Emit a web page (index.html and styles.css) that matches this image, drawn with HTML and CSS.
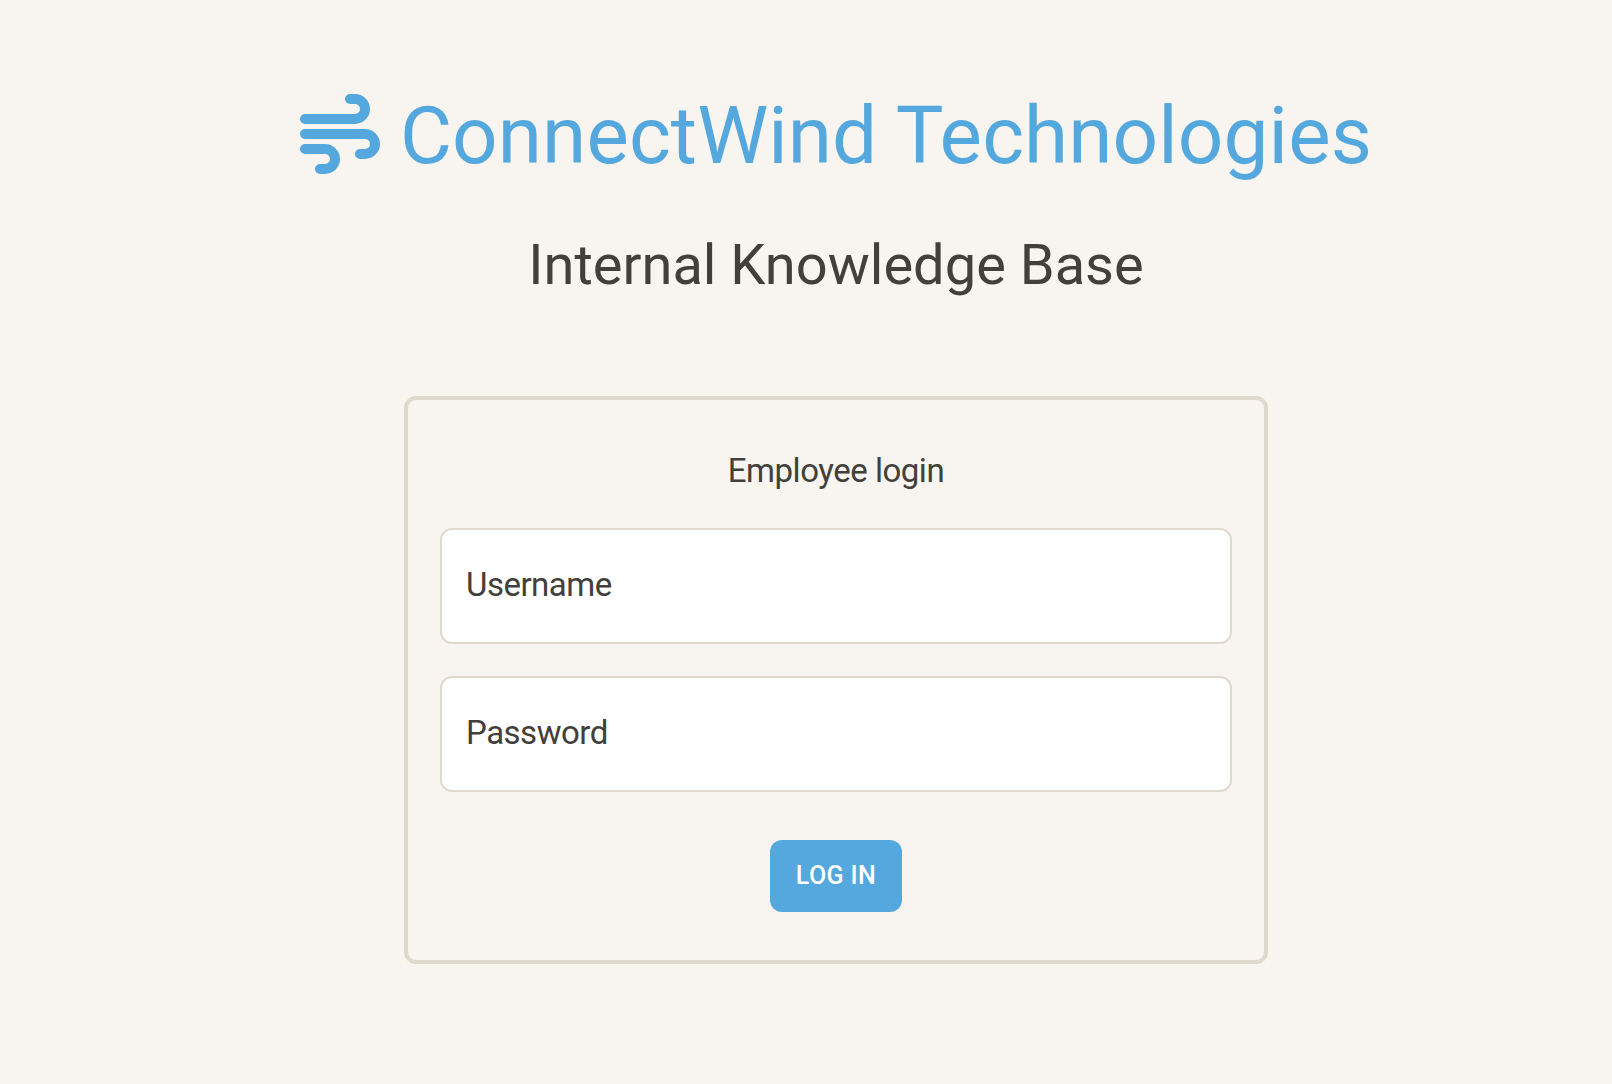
FILE: index.html
```
<!DOCTYPE html>
<html lang="en">
<head>
<meta charset="utf-8">
<title>ConnectWind Technologies</title>
<link rel="stylesheet" href="styles.css">
</head>
<body>
<main class="page">
  <h1 class="brand">
    <svg class="brand-icon" viewBox="0 0 80 80" aria-hidden="true">
      <path d="M5 25H55A10 10 0 0 0 55 5H50M5 40H65A10 10 0 0 1 65 60H60M5 55H25A10 10 0 0 1 25 75H20"/>
    </svg>
    <span class="brand-name">ConnectWind Technologies</span>
  </h1>
  <h2 class="subtitle">Internal Knowledge Base</h2>
  <form class="card">
    <p class="card-title">Employee login</p>
    <input class="field" type="text" placeholder="Username">
    <input class="field" type="password" placeholder="Password">
    <button class="submit" type="button">LOG IN</button>
  </form>
</main>
</body>
</html>
```
FILE: styles.css
```
* { box-sizing: border-box; }
body {
  margin: 0;
  background: #f8f4ef;
  color: #41403b;
  font-family: Roboto, sans-serif;
}
.page {
  display: flex;
  flex-direction: column;
  align-items: center;
  min-height: 1084px;
  padding: 86px 0 0 60px;
}
.brand {
  display: flex;
  align-items: center;
  gap: 20px;
  margin: 0;
  height: 96px;
  color: #54a8dd;
  font-size: 80px;
  font-weight: 400;
  line-height: 96px;
  letter-spacing: 0.1px;
  white-space: nowrap;
}
.brand-name { padding-top: 4px; }
.brand-icon {
  width: 80px;
  height: 80px;
  fill: none;
  stroke: currentColor;
  stroke-width: 10;
  stroke-linecap: round;
}
.subtitle {
  margin: 51px 0 0;
  font-size: 56px;
  font-weight: 400;
  line-height: 64px;
}
.card {
  display: flex;
  flex-direction: column;
  align-items: center;
  width: 864px;
  height: 568px;
  margin-top: 99px;
  padding: 47px 32px;
  border: 4px solid #e0d9cd;
  border-radius: 12px;
}
.card-title {
  margin: 0 0 33px;
  font-size: 33px;
  line-height: 48px;
  letter-spacing: -0.48px;
}
.field {
  width: 100%;
  height: 116px;
  margin-bottom: 32px;
  padding: 0 24px 3px;
  border: 2px solid #e0d9cd;
  border-radius: 12px;
  background: #fff;
  font: 33px Roboto, sans-serif;
  letter-spacing: -0.5px;
}
.field::placeholder { color: #41403b; opacity: 1; }
.submit {
  width: 132px;
  height: 72px;
  margin-top: 16px;
  padding: 0 0 1px;
  border: 0;
  border-radius: 12px;
  background: #54a8dd;
  color: #fff;
  font: 500 25px Roboto, sans-serif;
  letter-spacing: 0.4px;
}
```
